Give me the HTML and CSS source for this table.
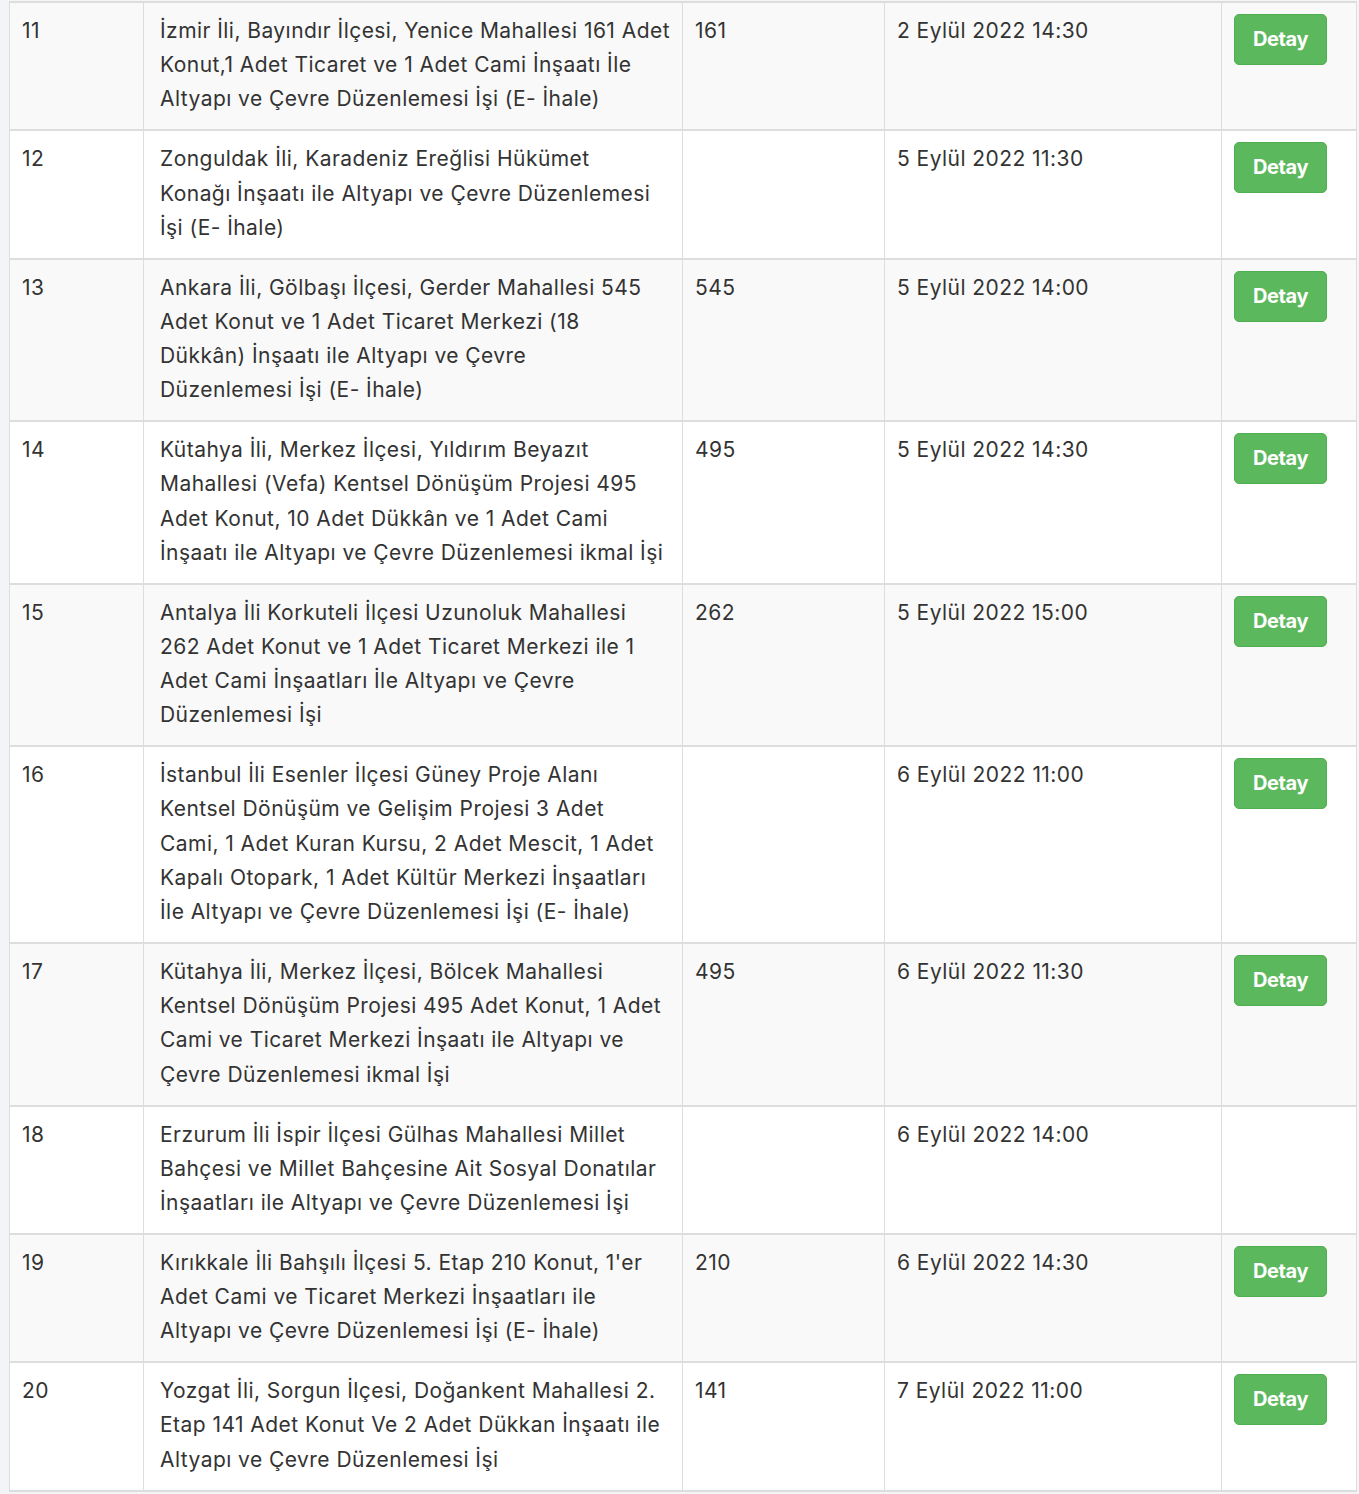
FILE: index.html
```html
<!DOCTYPE html>
<html lang="tr">
<head>
<meta charset="utf-8">
<title>İhaleler</title>
<link rel="stylesheet" href="styles.css">
</head>
<body>
<table class="tender-table">
  <colgroup>
    <col class="c-no"><col class="c-name"><col class="c-count"><col class="c-date"><col class="c-action">
  </colgroup>
  <tbody>
    <tr>
      <td>11</td>
      <td class="name">İzmir İli, Bayındır İlçesi, Yenice Mahallesi 161 Adet<br>Konut,1 Adet Ticaret ve 1 Adet Cami İnşaatı İle<br>Altyapı ve Çevre Düzenlemesi İşi (E- İhale)</td>
      <td>161</td>
      <td>2 Eylül 2022 14:30</td>
      <td class="action"><a class="btn-detail" href="#">Detay</a></td>
    </tr>
    <tr>
      <td>12</td>
      <td class="name">Zonguldak İli, Karadeniz Ereğlisi Hükümet<br>Konağı İnşaatı ile Altyapı ve Çevre Düzenlemesi<br>İşi (E- İhale)</td>
      <td></td>
      <td>5 Eylül 2022 11:30</td>
      <td class="action"><a class="btn-detail" href="#">Detay</a></td>
    </tr>
    <tr>
      <td>13</td>
      <td class="name">Ankara İli, Gölbaşı İlçesi, Gerder Mahallesi 545<br>Adet Konut ve 1 Adet Ticaret Merkezi (18<br>Dükkân) İnşaatı ile Altyapı ve Çevre<br>Düzenlemesi İşi (E- İhale)</td>
      <td>545</td>
      <td>5 Eylül 2022 14:00</td>
      <td class="action"><a class="btn-detail" href="#">Detay</a></td>
    </tr>
    <tr>
      <td>14</td>
      <td class="name">Kütahya İli, Merkez İlçesi, Yıldırım Beyazıt<br>Mahallesi (Vefa) Kentsel Dönüşüm Projesi 495<br>Adet Konut, 10 Adet Dükkân ve 1 Adet Cami<br>İnşaatı ile Altyapı ve Çevre Düzenlemesi ikmal İşi</td>
      <td>495</td>
      <td>5 Eylül 2022 14:30</td>
      <td class="action"><a class="btn-detail" href="#">Detay</a></td>
    </tr>
    <tr>
      <td>15</td>
      <td class="name">Antalya İli Korkuteli İlçesi Uzunoluk Mahallesi<br>262 Adet Konut ve 1 Adet Ticaret Merkezi ile 1<br>Adet Cami İnşaatları İle Altyapı ve Çevre<br>Düzenlemesi İşi</td>
      <td>262</td>
      <td>5 Eylül 2022 15:00</td>
      <td class="action"><a class="btn-detail" href="#">Detay</a></td>
    </tr>
    <tr>
      <td>16</td>
      <td class="name">İstanbul İli Esenler İlçesi Güney Proje Alanı<br>Kentsel Dönüşüm ve Gelişim Projesi 3 Adet<br>Cami, 1 Adet Kuran Kursu, 2 Adet Mescit, 1 Adet<br>Kapalı Otopark, 1 Adet Kültür Merkezi İnşaatları<br>İle Altyapı ve Çevre Düzenlemesi İşi (E- İhale)</td>
      <td></td>
      <td>6 Eylül 2022 11:00</td>
      <td class="action"><a class="btn-detail" href="#">Detay</a></td>
    </tr>
    <tr>
      <td>17</td>
      <td class="name">Kütahya İli, Merkez İlçesi, Bölcek Mahallesi<br>Kentsel Dönüşüm Projesi 495 Adet Konut, 1 Adet<br>Cami ve Ticaret Merkezi İnşaatı ile Altyapı ve<br>Çevre Düzenlemesi ikmal İşi</td>
      <td>495</td>
      <td>6 Eylül 2022 11:30</td>
      <td class="action"><a class="btn-detail" href="#">Detay</a></td>
    </tr>
    <tr>
      <td>18</td>
      <td class="name">Erzurum İli İspir İlçesi Gülhas Mahallesi Millet<br>Bahçesi ve Millet Bahçesine Ait Sosyal Donatılar<br>İnşaatları ile Altyapı ve Çevre Düzenlemesi İşi</td>
      <td></td>
      <td>6 Eylül 2022 14:00</td>
      <td class="action"></td>
    </tr>
    <tr>
      <td>19</td>
      <td class="name">Kırıkkale İli Bahşılı İlçesi 5. Etap 210 Konut, 1'er<br>Adet Cami ve Ticaret Merkezi İnşaatları ile<br>Altyapı ve Çevre Düzenlemesi İşi (E- İhale)</td>
      <td>210</td>
      <td>6 Eylül 2022 14:30</td>
      <td class="action"><a class="btn-detail" href="#">Detay</a></td>
    </tr>
    <tr>
      <td>20</td>
      <td class="name">Yozgat İli, Sorgun İlçesi, Doğankent Mahallesi 2.<br>Etap 141 Adet Konut Ve 2 Adet Dükkan İnşaatı ile<br>Altyapı ve Çevre Düzenlemesi İşi</td>
      <td>141</td>
      <td>7 Eylül 2022 11:00</td>
      <td class="action"><a class="btn-detail" href="#">Detay</a></td>
    </tr>
  </tbody>
</table>
</body>
</html>
```
FILE: styles.css
```css
html, body {
  margin: 0;
  background: #f3f4f8;
}
body {
  padding: 1px 0 0 9px;
  font-family: "Inter", "Open Sans", sans-serif;
  color: #333;
}
.tender-table {
  width: 1348px;
  table-layout: fixed;
  border-collapse: separate;
  border-spacing: 0;
  background: #fff;
  font-size: 21px;
  letter-spacing: 0.45px;
  line-height: 34.17px;
}
.c-no { width: 134px; }
.c-name { width: 539px; }
.c-count { width: 202px; }
.c-date { width: 337px; }
.c-action { width: 136px; }

.tender-table td {
  vertical-align: top;
  padding: 11px 12px 12.85px 12px;
  border-top: 2px solid #ddd;
  border-left: 1px solid #ddd;
  white-space: nowrap;
}
.tender-table td:last-child {
  border-right: 1px solid #ddd;
}
.tender-table tr:last-child td {
  border-bottom: 2px solid #ddd;
}
.tender-table tr:nth-child(odd) td {
  background: #f9f9f9;
}
.tender-table td.name {
  padding-left: 16px;
  padding-right: 8px;
}
.btn-detail {
  display: block;
  box-sizing: border-box;
  width: 93px;
  height: 51px;
  border: 1px solid #4fae4f;
  border-radius: 5px;
  background: #5cb85c;
  color: #fff;
  font-size: 20px;
  font-weight: 700;
  letter-spacing: -0.4px;
  line-height: 48px;
  text-align: center;
  text-decoration: none;
}
```
